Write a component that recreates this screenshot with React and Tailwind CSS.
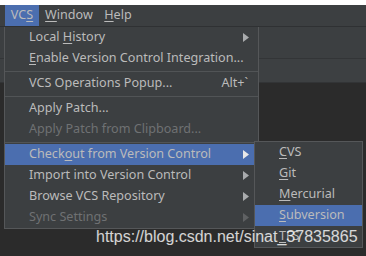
import React from 'react';

const font = { fontFamily: '"Noto Sans", "Liberation Sans", sans-serif' };

// "Local &History" -> underline the char after &
function Mnemonic({ text }) {
  const i = text.indexOf('&');
  if (i < 0) return <span>{text}</span>;
  return (
    <span>
      {text.slice(0, i)}
      <span className="underline underline-offset-2">{text[i + 1]}</span>
      {text.slice(i + 2)}
    </span>
  );
}

function Arrow({ color }) {
  return (
    <svg width="6" height="9" viewBox="0 0 6 9" className="shrink-0">
      <polygon points="0,0 6,4.5 0,9" fill={color} />
    </svg>
  );
}

function Item({ label, shortcut, arrow, disabled, active }) {
  const text = disabled ? 'text-[#6f7173]' : 'text-[#bbbbbb]';
  return (
    <div
      className={`h-[21px] flex items-center pl-[24px] pr-[9px] ${text} ${active ? 'bg-[#4b6eaf]' : ''}`}
    >
      <div className="flex-1 whitespace-nowrap">
        <Mnemonic text={label} />
      </div>
      {shortcut && <div className="whitespace-nowrap pr-[1px]">{shortcut}</div>}
      {arrow && <Arrow color={disabled ? '#5f6163' : active ? '#e8e8e8' : '#a9abad'} />}
    </div>
  );
}

function Sep() {
  return (
    <div className="h-[4px] flex items-center">
      <div className="h-px w-full bg-[#515456]" />
    </div>
  );
}

export default function App() {
  return (
    <div
      className="relative w-[366px] h-[256px] overflow-hidden bg-[#2b2b2b] text-[12.6px] leading-none"
      style={font}
    >
      {/* window behind the menu */}
      <div className="h-[5px] bg-white" />
      <div className="h-[21px] bg-[#3c3f41] flex items-center pl-[5px] text-[#bbbbbb]">
        <div className="h-full w-[34px] bg-[#4b6eaf] flex items-center justify-center">
          <Mnemonic text="VC&S" />
        </div>
        <div className="h-full w-[60px] flex items-center justify-center">
          <Mnemonic text="&Window" />
        </div>
        <div className="h-full w-[38px] flex items-center justify-center">
          <Mnemonic text="&Help" />
        </div>
      </div>
      <div className="h-px bg-[#2f3133]" />
      <div className="h-[32px] bg-[#3c3f41] border-b border-[#333537]" />
      <div className="h-[24px] bg-[#3d4042] border-b border-[#323436]" />

      {/* VCS dropdown */}
      <div className="absolute left-[4px] top-[27px] w-[255px] bg-[#3c3f41] border border-[#555759] border-t-0">
        <Item label="Local &History" arrow />
        <Item label="&Enable Version Control Integration..." />
        <Sep />
        <Item label="VCS Operations Popup..." shortcut="Alt+`" />
        <Sep />
        <Item label="Apply Patch..." />
        <Item label="Apply Patch from Clipboard..." disabled />
        <Sep />
        <Item label="Check&out from Version Control" arrow active />
        <Item label="Import into Version Control" arrow />
        <Item label="Browse VCS Repository" arrow />
        <Item label="Sync Settings" arrow disabled />
      </div>

      {/* Checkout submenu */}
      <div className="absolute left-[254px] top-[141px] w-[109px] bg-[#3c3f41] border border-[#555759]">
        <Item label="&CVS" />
        <Item label="&Git" />
        <Item label="&Mercurial" />
        <Item label="&Subversion" active />
        <Item label="&TFS" />
      </div>

      {/* watermark */}
      <div
        className="absolute left-[96px] top-[228px] text-[16px] leading-[18px] text-white/80 whitespace-nowrap"
        style={{ fontFamily: '"Liberation Sans", Arial, sans-serif' }}
      >
        https://blog.csdn.net/sinat_37835865
      </div>
    </div>
  );
}
